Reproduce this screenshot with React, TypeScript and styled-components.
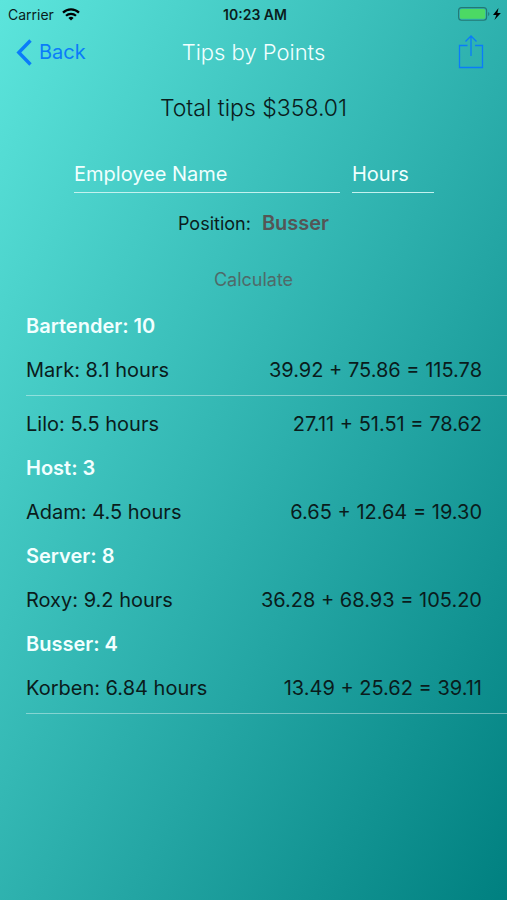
import React from "react";
import styled, { createGlobalStyle } from "styled-components";

const Global = createGlobalStyle`
  *, *::before, *::after { box-sizing: border-box; }
  body {
    margin: 0;
    font-family: Inter, "Liberation Sans", sans-serif;
    color: #0a1c1c;
  }
`;

const Screen = styled.main`
  min-height: 100vh;
  background: linear-gradient(to bottom right, #5ce5dc, #24a6a4 62%, #008080);
  overflow: hidden;
`;

const StatusBar = styled.div`
  display: grid;
  grid-template-columns: 1fr auto 1fr;
  align-items: center;
  height: 28px;
  padding: 0 5px 0 8px;
  font-size: 14px;
`;

const StatusSide = styled.div<{ $end?: boolean }>`
  display: flex;
  align-items: center;
  gap: 8px;
  justify-content: ${(p) => (p.$end ? "flex-end" : "flex-start")};
`;

const Clock = styled.time`
  font-weight: 600;
`;

const NavBar = styled.header`
  display: grid;
  grid-template-columns: 1fr auto 1fr;
  align-items: center;
  height: 48px;
  padding: 0 16px;
`;

const NavButton = styled.button<{ $end?: boolean }>`
  display: flex;
  align-items: center;
  gap: 7px;
  justify-self: ${(p) => (p.$end ? "end" : "start")};
  padding: 0 ${(p) => (p.$end ? 7 : 0)}px 0 0;
  border: 0;
  background: none;
  color: #0a7cfa;
  font: inherit;
  font-size: 20px;
`;

const Title = styled.h1`
  margin: 0;
  font-size: 22px;
  font-weight: 300;
  color: #f2ffff;
`;

const Total = styled.p`
  margin: 16px 0 0;
  text-align: center;
  font-size: 23px;
  line-height: 32px;
  font-weight: 300;
`;

const Form = styled.form`
  display: flex;
  flex-direction: column;
  align-items: center;
`;

const Fields = styled.div`
  display: grid;
  grid-template-columns: 266fr 82fr;
  gap: 12px;
  width: 100%;
  padding: 32px 73px 0 74px;
`;

const Field = styled.input`
  width: 100%;
  min-width: 0;
  height: 37px;
  padding: 0;
  border: 0;
  border-bottom: 1px solid #c4f2ef;
  border-radius: 0;
  background: none;
  color: #fff;
  font: inherit;
  font-size: 20px;
  outline: none;
  &::placeholder { color: #f0fffe; opacity: 1; }
`;

const Position = styled.div`
  display: flex;
  align-items: center;
  gap: 11px;
  margin-top: 16px;
  height: 28px;
  font-size: 18px;
`;

const PositionButton = styled.button`
  padding: 0;
  border: 0;
  background: none;
  color: #555;
  font: inherit;
  font-size: 20px;
  font-weight: 600;
`;

const Calculate = styled.button`
  margin-top: 31px;
  padding: 0;
  border: 0;
  background: none;
  color: #4f6a69;
  font: inherit;
  font-size: 18px;
  line-height: 24px;
`;

const Groups = styled.div`
  margin-top: 12px;
`;

const GroupTitle = styled.h2`
  margin: 0;
  padding-left: 26px;
  font-size: 20px;
  line-height: 44px;
  font-weight: 600;
  color: #f2ffff;
`;

const List = styled.ul`
  margin: 0 0 0 26px;
  padding: 0;
  list-style: none;
`;

const Row = styled.li<{ $rule?: boolean; $gap?: boolean }>`
  display: flex;
  justify-content: space-between;
  padding: ${(p) => (p.$gap ? 6 : 0)}px 25px ${(p) => (p.$rule ? 3 : 0)}px 0;
  border-bottom: ${(p) => (p.$rule ? "1px solid rgba(255, 255, 255, 0.4)" : "0")};
  font-size: 20px;
  line-height: 44px;
`;

type Person = { name: string; hours: string; sum: string; rule?: boolean; gap?: boolean };

const groups: { title: string; people: Person[] }[] = [
  {
    title: "Bartender: 10",
    people: [
      { name: "Mark", hours: "8.1", sum: "39.92 + 75.86 = 115.78", rule: true },
      { name: "Lilo", hours: "5.5", sum: "27.11 + 51.51 = 78.62", gap: true },
    ],
  },
  { title: "Host: 3", people: [{ name: "Adam", hours: "4.5", sum: "6.65 + 12.64 = 19.30" }] },
  { title: "Server: 8", people: [{ name: "Roxy", hours: "9.2", sum: "36.28 + 68.93 = 105.20" }] },
  { title: "Busser: 4", people: [{ name: "Korben", hours: "6.84", sum: "13.49 + 25.62 = 39.11", rule: true }] },
];

const WifiIcon = () => (
  <svg width="18" height="13" viewBox="0 0 18 13" fill="none" stroke="#000" strokeWidth="2.2" aria-hidden="true">
    <path d="M1 4.6a11.4 11.4 0 0 1 16 0M4 7.8a7.2 7.2 0 0 1 10 0" />
    <path d="M9 12.6 6.4 9.9a3.8 3.8 0 0 1 5.2 0z" fill="#000" stroke="none" />
  </svg>
);

const BatteryIcon = () => (
  <svg width="44" height="14" viewBox="0 0 44 14" aria-hidden="true">
    <rect x="0.6" y="0.6" width="28" height="12.6" rx="3" fill="none" stroke="#237874" strokeWidth="1.1" />
    <rect x="2" y="2" width="25.2" height="9.8" rx="1.6" fill="#4cd964" />
    <path d="M30.2 5c1.6.5 1.6 3.4 0 4z" fill="#237874" />
    <path d="m40.5 1-5.5 7h3.4l-2 5 6.5-7h-3.5z" fill="#000" />
  </svg>
);

const BackIcon = () => (
  <svg width="16" height="28" viewBox="0 0 16 28" fill="none" stroke="currentColor" strokeWidth="3.4" aria-hidden="true">
    <path d="M14.5 2.5 2.8 14.5l11.7 12" />
  </svg>
);

const ShareIcon = () => (
  <svg width="26" height="36" viewBox="0 0 26 36" fill="none" stroke="currentColor" strokeWidth="1.3" aria-hidden="true">
    <path d="M9.5 11.5H1.5v22h23v-22H17M13 22V2M7.5 7.5 13 2l5.5 5.5" />
  </svg>
);

export default function App() {
  return (
    <>
      <Global />
      <Screen>
        <StatusBar>
          <StatusSide>Carrier <WifiIcon /></StatusSide>
          <Clock>10:23 AM</Clock>
          <StatusSide $end><BatteryIcon /></StatusSide>
        </StatusBar>
        <NavBar>
          <NavButton type="button"><BackIcon />Back</NavButton>
          <Title>Tips by Points</Title>
          <NavButton type="button" $end aria-label="Share"><ShareIcon /></NavButton>
        </NavBar>
        <Total>Total tips $358.01</Total>
        <Form onSubmit={(e) => e.preventDefault()}>
          <Fields>
            <Field aria-label="Employee Name" placeholder="Employee Name" />
            <Field aria-label="Hours" placeholder="Hours" inputMode="decimal" />
          </Fields>
          <Position>
            <span id="position-label">Position:</span>
            <PositionButton type="button" id="position" aria-labelledby="position-label position">Busser</PositionButton>
          </Position>
          <Calculate type="submit">Calculate</Calculate>
        </Form>
        <Groups>
          {groups.map((g) => (
            <section key={g.title}>
              <GroupTitle>{g.title}</GroupTitle>
              <List>
                {g.people.map((p) => (
                  <Row key={p.name} $rule={p.rule} $gap={p.gap}>
                    <span>{p.name}: {p.hours} hours</span>
                    <span>{p.sum}</span>
                  </Row>
                ))}
              </List>
            </section>
          ))}
        </Groups>
      </Screen>
    </>
  );
}
